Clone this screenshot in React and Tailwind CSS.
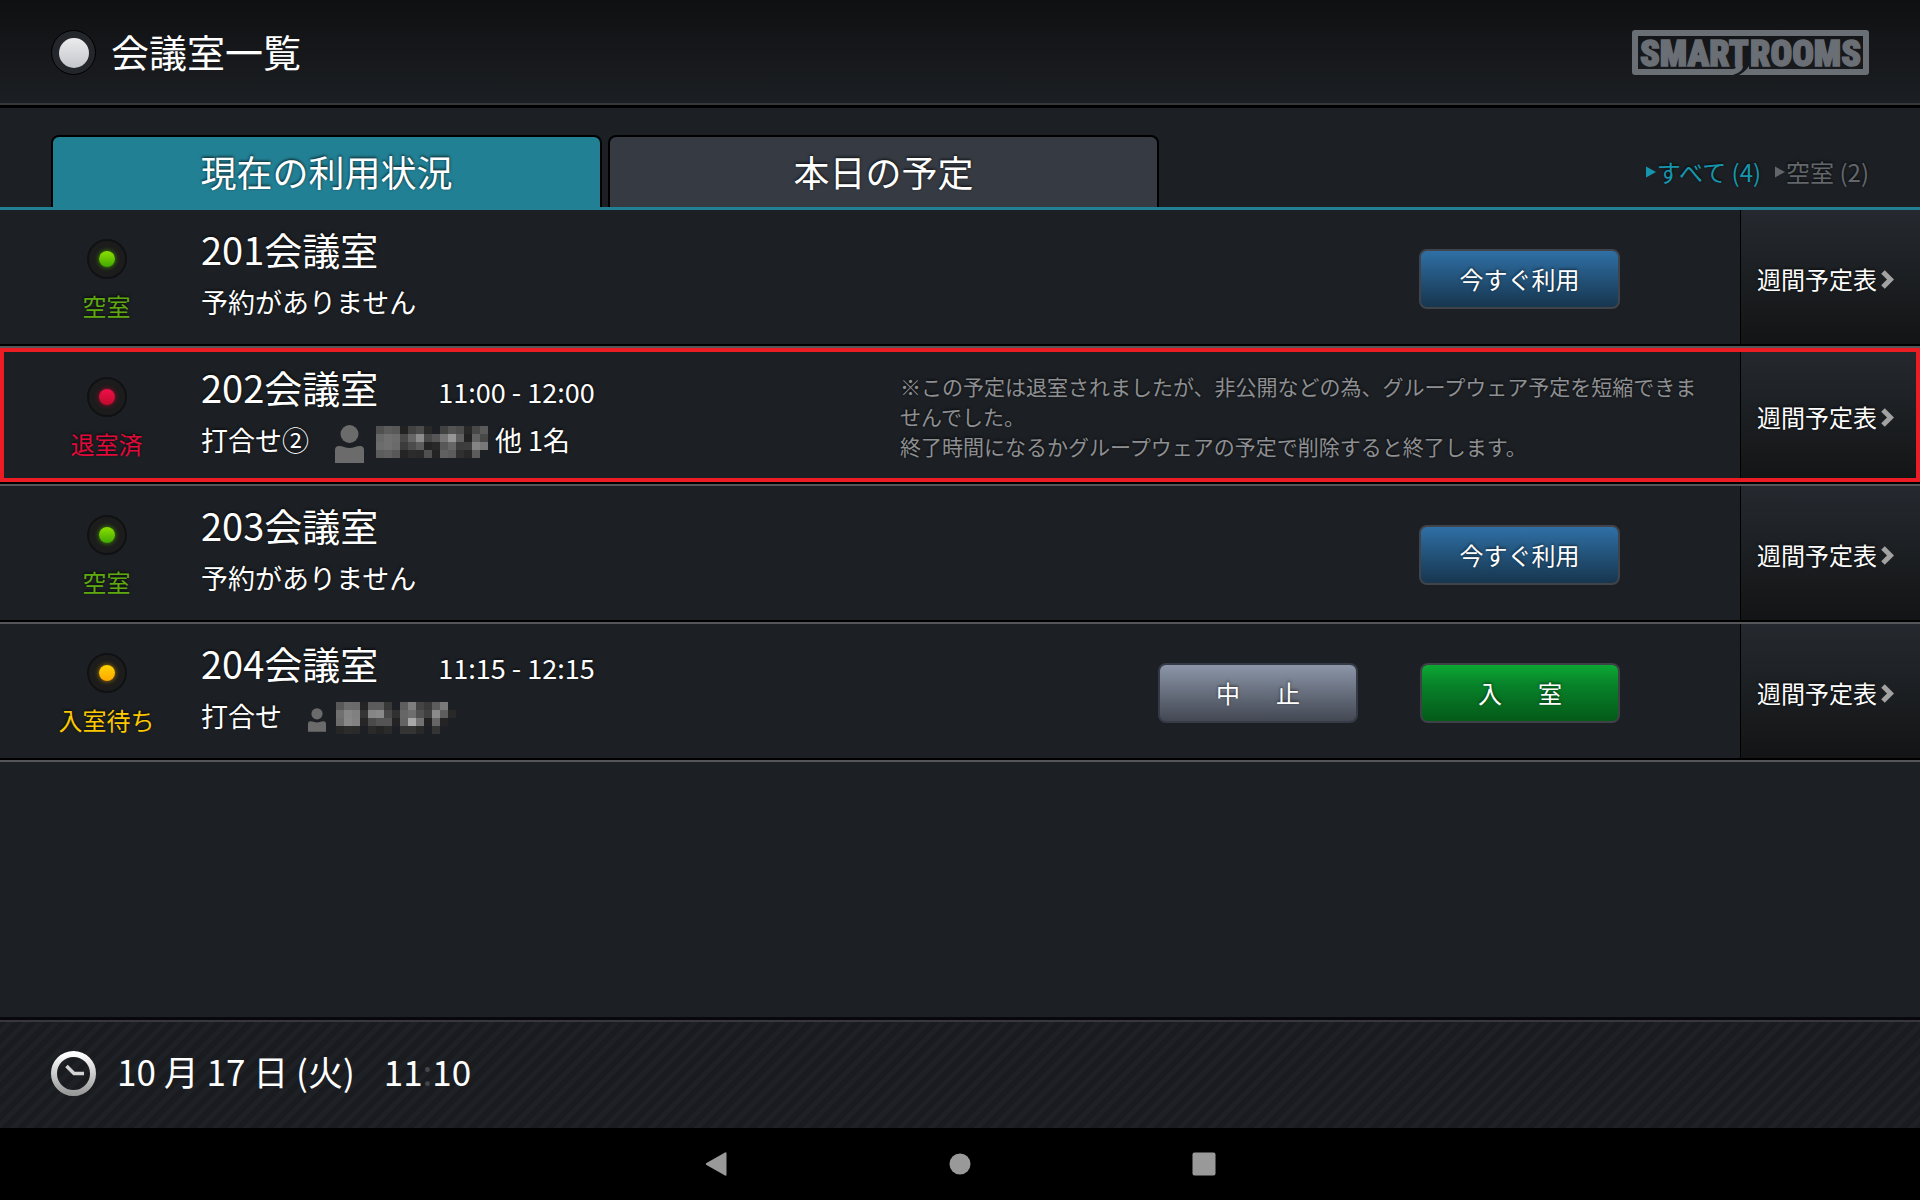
import clsx from 'clsx';

const STATUS = {
  vacant: { label: '空室', text: 'text-[#5fa90f]', led: 'bg-linear-to-b from-[#8be000] to-[#3fa800] shadow-[0_0_5px_#4a9a00]' },
  left: { label: '退室済', text: 'text-[#e0093a]', led: 'bg-linear-to-b from-[#f0104a] to-[#c00a2c] shadow-[0_0_5px_#a00a2c]' },
  waiting: { label: '入室待ち', text: 'text-[#fcc800]', led: 'bg-linear-to-b from-[#ffd400] to-[#ffa800] shadow-[0_0_5px_#b08000]' },
};

const BUTTON_TONE = {
  blue: 'border-[#40434a] bg-linear-to-b from-[#2f70a6] to-[#17364f]',
  gray: 'border-[#353b46] bg-linear-to-b from-[#8d97a9] to-[#434853]',
  green: 'border-[#3e4146] bg-linear-to-b from-[#0ca833] via-[#08832a] via-35% to-[#045a18]',
};

// Masked names: one hex pair per 8px cell, ".." is an empty cell
const MASK_LEFT = [
  '50 5c 58 22 42 4c 28 .. 42 54 4c 28 48 5a',
  '68 70 6c 48 66 8c 48 56 76 96 60 22 62 48',
  '6c 70 6a 3c 4c 5c 24 28 58 66 3c 3e 84 78',
  '5c 60 58 24 2c 2a 50 24 60 5c 30 28 5c ..',
];
const MASK_WAITING = [
  '58 6c 6a 24 5c 5c 38 .. 5e 7e 44 3a 5c 7a ..',
  '70 86 80 34 86 8a 48 30 66 6e 50 40 8a 5e 28',
  '6c 88 82 26 4a 54 54 24 64 a8 72 22 66 24 ..',
  '26 2c 2a .. 2a 24 2a .. 34 34 28 .. 34 .. ..',
];

const ROOMS = [
  { id: 1, name: '201会議室', status: 'vacant', title: '予約がありません', actions: [{ label: '今すぐ利用', tone: 'blue' }] },
  {
    id: 2,
    name: '202会議室',
    status: 'left',
    time: '11:00 - 12:00',
    title: '打合せ②',
    mask: MASK_LEFT,
    others: '他 1名',
    largeIcon: true,
    highlighted: true,
    notes: [
      '※この予定は退室されましたが、非公開などの為、グループウェア予定を短縮できませんでした。',
      '終了時間になるかグループウェアの予定で削除すると終了します。',
    ],
  },
  { id: 3, name: '203会議室', status: 'vacant', title: '予約がありません', actions: [{ label: '今すぐ利用', tone: 'blue' }] },
  {
    id: 4,
    name: '204会議室',
    status: 'waiting',
    time: '11:15 - 12:15',
    title: '打合せ',
    mask: MASK_WAITING,
    actions: [
      { label: '中止', tone: 'gray', spread: true },
      { label: '入室', tone: 'green', spread: true },
    ],
  },
];

function Logo() {
  return (
    <svg width="237" height="45" viewBox="0 0 237 45" role="img" aria-label="SMART ROOMS">
      <path
        fill="#6a6e75"
        fillRule="evenodd"
        d="M3 0h231a3 3 0 0 1 3 3v39a3 3 0 0 1-3 3H107q6-3 10-9v3h114V6H6v33h95q3 0 3-3h7q0 6-10 9H3a3 3 0 0 1-3-3V3a3 3 0 0 1 3-3Z"
      />
      <g
        className="font-['Roboto_Condensed','Open_Sans_Condensed','Noto_Sans_ExtraCondensed','Noto_Sans_Condensed','Inter',sans-serif] text-[36px] font-black"
        fill="#6a6e75"
        stroke="#6a6e75"
        strokeWidth="1.500"
      >
        <text x="8" y="36">SMART</text>
        <text x="118" y="36">ROOMS</text>
      </g>
    </svg>
  );
}

function PersonIcon({ large }) {
  return (
    <svg viewBox="0 0 29 38" className={clsx('mt-2 shrink-0 fill-[#6b6b6b]', large ? 'h-[38px] w-[29px]' : 'h-6 w-[18px]')}>
      <circle cx="14.500" cy="9" r="9" />
      <path d="M0 25q0-4 4-4 3 0 5 1 5.500 2 11 0 2-1 5-1 4 0 4 4v13H0Z" />
    </svg>
  );
}

function MaskedName({ cells }) {
  const rows = cells.map((row) => row.split(' '));
  return (
    <svg width={rows[0].length * 8} height={rows.length * 8} className="shrink-0" shapeRendering="crispEdges">
      {rows.map((row, y) =>
        row.map((tone, x) =>
          tone === '..' ? null : <rect key={`${x}-${y}`} x={x * 8} y={y * 8} width="8" height="8" fill={`#${tone}${tone}${tone}`} />
        )
      )}
    </svg>
  );
}

function ClockIcon() {
  return (
    <svg width="45" height="45" viewBox="0 0 45 45" fill="none" className="shrink-0">
      <defs>
        <linearGradient id="clock" x1="0" y1="0" x2="0" y2="1">
          <stop offset="0" stopColor="#fff" />
          <stop offset="1" stopColor="#9a9a9a" />
        </linearGradient>
      </defs>
      <circle cx="22.500" cy="22.500" r="19.500" stroke="url(#clock)" strokeWidth="6" />
      <path d="m15.500 15 7.500 7.500h10" stroke="#d4d4d4" strokeWidth="3.500" />
    </svg>
  );
}

function Tab({ active, children }) {
  return (
    <button
      role="tab"
      aria-selected={active}
      className={clsx(
        'h-[72px] w-[551px] rounded-t-lg border-2 border-b-0 border-black pb-0.5 text-[36px] leading-none text-shadow-[0_-1px_3px_rgb(0_0_0/0.8)]',
        active ? 'bg-[#228094]' : 'bg-[#363b43]'
      )}
    >
      {children}
    </button>
  );
}

function FilterLink({ active, children }) {
  return (
    <a href="#" className={clsx('flex items-center gap-px', active ? 'text-[#1795ad]' : 'text-[#63666b]')}>
      <svg width="10" height="12" viewBox="0 0 10 12" fill="currentColor">
        <path d="M0 0.500 10 6 0 11.500Z" />
      </svg>
      {children}
    </a>
  );
}

function ActionButton({ label, tone, spread }) {
  return (
    <button
      className={clsx(
        'flex h-[60px] items-center justify-center rounded-lg border-2 text-2xl text-shadow-[0_-1px_3px_rgb(0_0_0/0.6)]',
        spread ? 'w-[200px] gap-9' : 'w-[201px]',
        BUTTON_TONE[tone]
      )}
    >
      {spread ? label.split('').map((c) => <span key={c}>{c}</span>) : label}
    </button>
  );
}

function RoomRow({ room }) {
  const status = STATUS[room.status];
  return (
    <li className="relative border-b-2 border-[#55565a]">
      <div className="flex h-[136px] border-b-2 border-black">
        <div className="flex w-[201px] shrink-0 flex-col items-center gap-[9px] pt-[29px] pr-[40px] pl-[52px]">
          <span className="flex size-10 items-center justify-center rounded-full border-2 border-[#101113] bg-[#1c1c1c]">
            <span className={clsx('size-4 rounded-full', status.led)} />
          </span>
          <span className={clsx('text-2xl leading-9 whitespace-nowrap', status.text)}>{status.label}</span>
        </div>

        <div className="shrink-0 pt-[11px]">
          <div className="flex h-14 items-baseline gap-[60px] leading-[56px]">
            <h2 className="text-[38px]">{room.name}</h2>
            {room.time && <span className="text-[27px]">{room.time}</span>}
          </div>
          <div className="flex h-[50px] items-center text-[27px]">
            <span>{room.title}</span>
            {room.mask && (
              <span className="ml-[26px] flex items-center">
                <PersonIcon large={room.largeIcon} />
                <span className={clsx('mt-1 mr-[7px]', room.largeIcon ? 'ml-3' : 'ml-2.5')}>
                  <MaskedName cells={room.mask} />
                </span>
                {room.others}
              </span>
            )}
          </div>
        </div>

        <div className="flex flex-1 items-center justify-end pt-1">
          {room.notes && (
            <div className="mr-[30px] w-[810px] pb-0.5 text-[21px] leading-[30px] text-[#8e8f92]">
              {room.notes.map((note) => (
                <p key={note}>{note}</p>
              ))}
            </div>
          )}
          {room.actions && (
            <div className="mr-[120px] flex gap-[62px]">
              {room.actions.map((action) => (
                <ActionButton key={action.label} {...action} />
              ))}
            </div>
          )}
        </div>

        <a
          href="#"
          className="flex w-[180px] shrink-0 items-center gap-1 border-l border-black bg-linear-to-b from-[#25282e] via-[#1c1f22] to-[#131415] pt-1 pl-4 text-2xl whitespace-nowrap"
        >
          週間予定表
          <svg width="13" height="19" viewBox="0 0 13 19" fill="none">
            <path d="m2 2 7.500 7.500L2 17" stroke="#a2a2a2" strokeWidth="5" />
          </svg>
        </a>
      </div>
      {room.highlighted && <div className="pointer-events-none absolute inset-x-0 top-0 bottom-0.5 border-4 border-[#ec1c24]" />}
    </li>
  );
}

export default function App() {
  return (
    <div className="flex min-h-screen flex-col bg-[#1c2024] font-['Noto_Sans_CJK_JP',sans-serif] text-white">
      <header className="flex h-[108px] items-center justify-between border-b-[3px] border-black bg-linear-to-b from-[#0f1012] to-[#1c1f23] px-[51px] shadow-[inset_0_-2px_#36373b]">
        <div className="flex items-center gap-[15px]">
          <span className="flex size-[45px] items-center justify-center rounded-full border border-black bg-[#23262b]">
            <span className="size-[30px] rounded-full bg-linear-to-b from-[#ececee] to-[#c3c6cb]" />
          </span>
          <h1 className="pb-1 text-[38px] leading-none">会議室一覧</h1>
        </div>
        <Logo />
      </header>

      <main className="flex-1 text-shadow-[0_-1px_3px_rgb(0_0_0/0.8)]">
        <div className="flex justify-between border-b-[3px] border-[#228094] pt-[27px] pr-[51px] pl-[51px]">
          <div role="tablist" className="flex gap-1.5">
            <Tab active>現在の利用状況</Tab>
            <Tab>本日の予定</Tab>
          </div>
          <nav className="flex items-center gap-3.5 pt-0.5 text-2xl">
            <FilterLink active>すべて (4)</FilterLink>
            <FilterLink>空室 (2)</FilterLink>
          </nav>
        </div>

        <ul>
          {ROOMS.map((room) => (
            <RoomRow key={room.id} room={room} />
          ))}
        </ul>
      </main>

      <footer className="flex h-[111px] items-center gap-[21px] border-t-[3px] border-[#08080c] bg-[repeating-linear-gradient(135deg,#191b1f_0_6px,#1d2125_6px_11px)] px-[51px] pb-0.5 text-[35px] leading-none shadow-[inset_0_2px_#36373f]">
        <ClockIcon />
        <time className="flex gap-[29px] pb-1.5" dateTime="10-17T11:10">
          <span>10 月 17 日 (火)</span>
          <span>
            11<span className="text-[#44464a]">:</span>10
          </span>
        </time>
      </footer>

      <nav className="flex h-[72px] items-center justify-center gap-[220px] bg-black">
        <button aria-label="戻る">
          <svg width="24" height="24" viewBox="0 0 24 24" fill="#999">
            <path d="M21 0.500q1.500-.8 1.500 1v21q0 1.800-1.500 1L2.500 13q-1.500-1 0-2Z" />
          </svg>
        </button>
        <button aria-label="ホーム">
          <svg width="24" height="24" viewBox="0 0 24 24" fill="#999">
            <circle cx="12" cy="12" r="10.500" />
          </svg>
        </button>
        <button aria-label="履歴">
          <svg width="24" height="24" viewBox="0 0 24 24" fill="#999">
            <rect x="0.500" y="0.500" width="23" height="23" rx="2" />
          </svg>
        </button>
      </nav>
    </div>
  );
}
